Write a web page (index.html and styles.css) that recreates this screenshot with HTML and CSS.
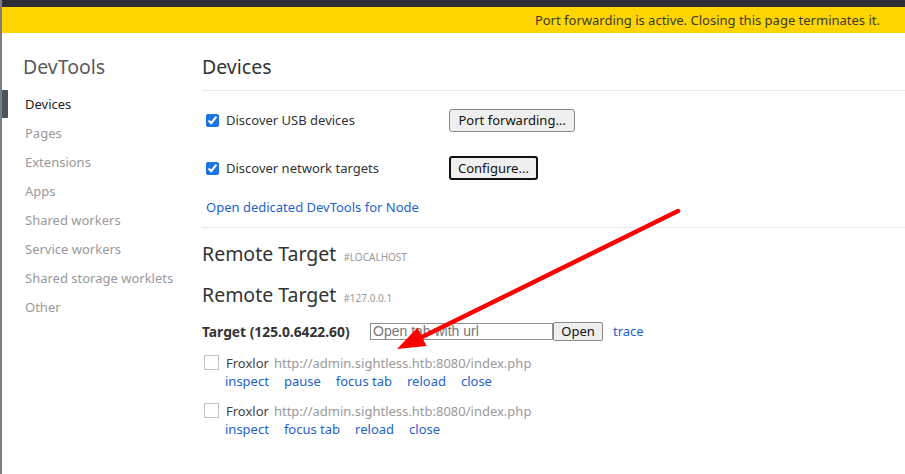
FILE: index.html
```html
<!DOCTYPE html>
<html>
<head>
<meta charset="utf-8">
<link rel="stylesheet" href="styles.css">
</head>
<body>
<div class="frame">
  <div class="edge"></div>
  <div class="window">
    <div class="topbar"></div>
    <div class="banner">Port forwarding is active. Closing this page terminates it.</div>
    <div class="layout">
      <nav class="sidebar">
        <div class="brand">DevTools</div>
        <ul class="nav">
          <li class="nav-item selected">Devices</li>
          <li class="nav-item">Pages</li>
          <li class="nav-item">Extensions</li>
          <li class="nav-item">Apps</li>
          <li class="nav-item">Shared workers</li>
          <li class="nav-item">Service workers</li>
          <li class="nav-item">Shared storage worklets</li>
          <li class="nav-item">Other</li>
        </ul>
      </nav>
      <main class="content">
        <header class="page-header"><h1 class="page-title">Devices</h1></header>
        <section class="settings">
          <div class="setting-row">
            <label class="check-label"><input type="checkbox" class="check" checked>Discover USB devices</label>
            <button class="btn">Port forwarding...</button>
          </div>
          <div class="setting-row">
            <label class="check-label"><input type="checkbox" class="check" checked>Discover network targets</label>
            <button class="btn focused">Configure...</button>
          </div>
          <div class="node-link"><a class="link">Open dedicated DevTools for Node</a></div>
        </section>
        <section class="remote">
          <h2 class="remote-title">Remote Target <span class="remote-tag">#LOCALHOST</span></h2>
          <h2 class="remote-title">Remote Target <span class="remote-tag">#127.0.0.1</span></h2>
          <div class="target-row">
            <span class="target-name">Target (125.0.6422.60)</span>
            <input class="url-input" type="text" placeholder="Open tab with url">
            <button class="btn btn-open">Open</button>
            <a class="link trace">trace</a>
          </div>
          <div class="entry">
            <span class="box"></span>
            <div class="entry-body">
              <div class="entry-line"><span class="entry-name">Froxlor</span><span class="entry-url">http://admin.sightless.htb:8080/index.php</span></div>
              <div class="actions"><a class="link">inspect</a><a class="link">pause</a><a class="link">focus tab</a><a class="link">reload</a><a class="link">close</a></div>
            </div>
          </div>
          <div class="entry">
            <span class="box"></span>
            <div class="entry-body">
              <div class="entry-line"><span class="entry-name">Froxlor</span><span class="entry-url">http://admin.sightless.htb:8080/index.php</span></div>
              <div class="actions"><a class="link">inspect</a><a class="link">focus tab</a><a class="link">reload</a><a class="link">close</a></div>
            </div>
          </div>
        </section>
      </main>
    </div>
  </div>
</div>
<svg class="annotation" width="905" height="474" viewBox="0 0 905 474">
  <line x1="678" y1="211" x2="420" y2="338" stroke="#ff0000" stroke-width="4.5" stroke-linecap="round"/>
  <polygon points="397,349 417.5,327.5 426.5,346" fill="#ff0000"/>
</svg>
</body>
</html>
```
FILE: styles.css
```css
* { box-sizing: border-box; }
html, body { margin: 0; padding: 0; background: #fff; }
body {
  width: 905px;
  height: 474px;
  overflow: hidden;
  font-family: "Noto Sans", "Open Sans", sans-serif;
  font-size: 13px;
  color: #333;
  position: relative;
}
.frame { display: flex; height: 474px; }
.edge { width: 2px; background: #7d7d7d; flex: none; }
.window { flex: 1; display: flex; flex-direction: column; min-width: 0; }
.topbar { height: 7px; background: #2d2d35; }
.banner {
  height: 26px;
  background: #ffd500;
  color: #3a3a3a;
  font-size: 13px;
  line-height: 26px;
  text-align: right;
  padding-right: 25px;
}
.layout { display: flex; flex: 1; }
.sidebar { width: 200px; flex: none; }
.brand {
  margin-top: 20px;
  padding-left: 21px;
  font-size: 19.5px;
  line-height: 28px;
  color: #5a5a5a;
}
.nav { list-style: none; margin: 9px 0 0; padding: 0; }
.nav-item {
  height: 29px;
  line-height: 29px;
  padding-left: 23px;
  color: #999;
  position: relative;
}
.nav-item.selected { color: #222; }
.nav-item.selected::before {
  content: "";
  position: absolute;
  left: 0; top: 0;
  width: 6px; height: 28px;
  background: #4b5561;
}
.content { flex: 1; min-width: 0; }
.page-header {
  padding-top: 20px;
  padding-bottom: 9px;
  border-bottom: 1px solid #e9e9e9;
}
.page-title {
  margin: 0;
  font-size: 19.5px;
  font-weight: normal;
  line-height: 28px;
  color: #333;
}
.settings { padding: 5px 0 10px; border-bottom: 1px solid #e9e9e9; }
.setting-row { height: 48px; display: flex; align-items: center; }
.check-label { width: 247px; display: flex; align-items: center; color: #333; }
.check {
  margin: 0 7px 0 4px;
  width: 13px; height: 13px;
  accent-color: #1a73e8;
}
.btn {
  font-family: "Noto Sans", "Open Sans", sans-serif;
  font-size: 13px;
  color: #111;
  background: #efefef;
  border: 1px solid #8a8a8a;
  border-radius: 3px;
  padding: 0 8.5px;
  height: 23px;
  line-height: 21px;
}
.btn.focused { border: 2px solid #111; height: 24px; padding: 0 7px; }
.node-link { margin-top: 5px; line-height: 20px; padding-left: 4px; }
.link { color: #1f5fd0; cursor: pointer; }
.remote { padding-top: 12px; }
.remote-title {
  margin: 0 0 13px;
  height: 28px;
  display: flex;
  align-items: baseline;
  font-size: 19.5px;
  font-weight: normal;
  line-height: 28px;
  color: #333;
}
.remote-tag { font-size: 10px; line-height: 10px; color: #999; margin-left: 7px; }
.target-row {
  display: flex;
  align-items: center;
  height: 20px;
  margin-top: -1px;
}
.target-name { font-weight: bold; font-size: 13.8px; color: #333; width: 168px; }
.url-input {
  width: 183px;
  height: 17px;
  border: 1px solid #8f8f8f;
  padding: 0 2px;
  font-family: "Liberation Sans", Arial, sans-serif;
  font-size: 14px;
  margin: 0;
}
.url-input::placeholder { color: #777; }
.btn-open { height: 19px; line-height: 17px; width: 50px; padding: 0; border-radius: 2px; }
.trace { margin-left: 10px; }
.entry { display: flex; margin-top: 13px; margin-left: 2px; }
.entry + .entry { margin-top: 12px; }
.box {
  width: 15px; height: 15px;
  border: 1px solid #c4c4c4;
  flex: none;
  margin-top: 1px;
  margin-right: 6px;
}
.entry-line, .actions { line-height: 18px; height: 18px; }
.entry-name { color: #444; margin-left: 1px; margin-right: 5px; }
.entry-url { color: #999; }
.actions { display: flex; }
.actions .link { margin-right: 15px; }
.annotation { position: absolute; left: 0; top: 0; pointer-events: none; }
```
